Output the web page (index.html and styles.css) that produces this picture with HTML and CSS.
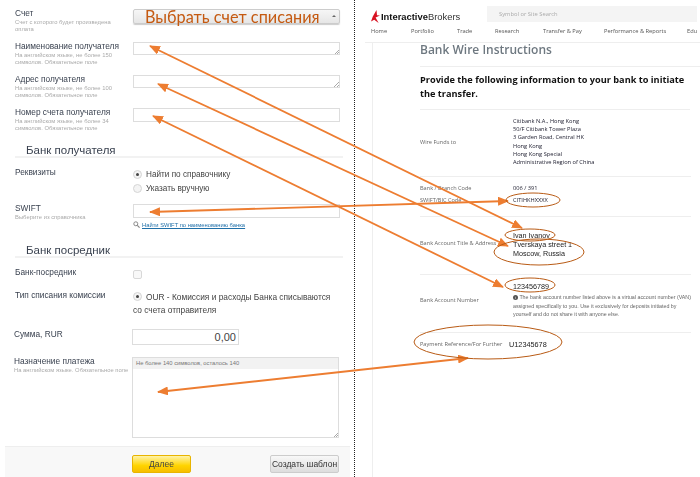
FILE: index.html
```html
<!DOCTYPE html>
<html>
  <head>
    <meta charset="UTF-8">
    <title>Банковский перевод</title>
    <link rel="stylesheet" href="styles.css">
  </head>
  <body>
    <div class="layout">
      <!-- форма банка -->
      <div class="form-side">
        <div class="row row-account">
          <div class="label-col">
            <div class="label">Счет</div>
            <div class="hint">Счет с которого будет произведена оплата</div>
          </div>
          <div class="select-box"><span class="select-text">Выбрать счет списания</span><span class="select-caret"></span></div>
        </div>
        <div class="row row-name">
          <div class="label-col">
            <div class="label">Наименование получателя</div>
            <div class="hint">На английском языке, не более 150 символов. Обязательное поле</div>
          </div>
          <div class="input input-area"><span class="grip"></span></div>
        </div>
        <div class="row row-name">
          <div class="label-col">
            <div class="label">Адрес получателя</div>
            <div class="hint">На английском языке, не более 100 символов. Обязательное поле</div>
          </div>
          <div class="input input-area"><span class="grip"></span></div>
        </div>
        <div class="row row-name">
          <div class="label-col">
            <div class="label">Номер счета получателя</div>
            <div class="hint">На английском языке, не более 34 символов. Обязательное поле</div>
          </div>
          <div class="input input-line"></div>
        </div>

        <div class="section-title first">Банк получателя</div>
        <div class="row row-details">
          <div class="label-col"><div class="label">Реквизиты</div></div>
          <div class="options">
            <div class="option"><span class="radio on"></span>Найти по справочнику</div>
            <div class="option"><span class="radio"></span>Указать вручную</div>
          </div>
        </div>
        <div class="row row-swift">
          <div class="label-col">
            <div class="label">SWIFT</div>
            <div class="hint">Выберите из справочника</div>
          </div>
          <div class="field-col">
            <div class="input input-line"></div>
            <div class="find">
              <svg width="7" height="7" viewBox="0 0 7 7"><circle cx="2.8" cy="2.8" r="2" fill="none" stroke="#888" stroke-width="1"/><path d="M4.3 4.3 6.6 6.6" stroke="#888" stroke-width="1.2"/></svg>
              <a class="find-link">Найти SWIFT по наименованию банка</a>
            </div>
          </div>
        </div>

        <div class="section-title">Банк посредник</div>
        <div class="row row-middle">
          <div class="label-col"><div class="label">Банк-посредник</div></div>
          <span class="checkbox"></span>
        </div>
        <div class="row row-fee">
          <div class="label-col"><div class="label">Тип списания комиссии</div></div>
          <div class="fee-text"><span class="radio on"></span>OUR - Комиссия и расходы Банка списываются со счета отправителя</div>
        </div>
        <div class="row row-sum">
          <div class="label-col"><div class="label">Сумма, RUR</div></div>
          <div class="input input-sum">0,00</div>
        </div>
        <div class="row row-purpose">
          <div class="label-col">
            <div class="label">Назначение платежа</div>
            <div class="hint nowrap">На английском языке. Обязательное поле</div>
          </div>
          <div class="input input-big">
            <div class="counter">Не более 140 символов, осталось 140</div>
            <span class="grip"></span>
          </div>
        </div>
        <div class="footer">
          <button class="btn-next">Далее</button>
          <button class="btn-template">Создать шаблон</button>
        </div>
      </div>

      <!-- инструкция Interactive Brokers -->
      <div class="ib-side">
        <div class="ib-head">
          <div class="logo">
            <svg width="9" height="13" viewBox="0 0 9 13"><path d="M5.5 0 6 5.2 9 5.4 4.6 7.6 7.6 13 3.2 9.8 0 11.6 1.8 6.4Z" fill="#d81222"/></svg>
            <span class="logo-text"><b>Interactive</b>Brokers</span>
          </div>
          <div class="search">Symbol or Site Search</div>
        </div>
        <div class="nav">
          <span class="nav-home">Home</span>
          <span class="nav-portfolio">Portfolio</span>
          <span class="nav-trade">Trade</span>
          <span class="nav-research">Research</span>
          <span class="nav-transfer">Transfer &amp; Pay</span>
          <span class="nav-reports">Performance &amp; Reports</span>
          <span>Edu</span>
        </div>
        <div class="ib-body">
          <h1 class="ib-title">Bank Wire Instructions</h1>
          <div class="ib-lead">Provide the following information to your bank to initiate the transfer.</div>

          <div class="ib-row row-funds">
            <div class="ib-label">Wire Funds to</div>
            <div class="ib-value">Citibank N.A., Hong Kong<br>50/F Citibank Tower Plaza<br>3 Garden Road, Central HK<br>Hong Kong<br>Hong Kong Special<br>Administrative Region of China</div>
          </div>
          <div class="ib-row row-code">
            <div class="code-line"><div class="ib-label">Bank / Branch Code</div><div class="ib-value">006 / 391</div></div>
            <div class="code-line"><div class="ib-label">SWIFT/BIC Code</div><div class="ib-value">CITIHKHXXXX</div></div>
          </div>
          <div class="ib-row row-title">
            <div class="ib-label">Bank Account Title &amp; Address</div>
            <div class="ib-value filled">Ivan Ivanov<br>Tverskaya street 1<br>Moscow, Russia</div>
          </div>
          <div class="ib-row row-number">
            <div class="ib-label">Bank Account Number</div>
            <div>
              <div class="ib-value filled">123456789</div>
              <div class="ib-note"><span class="info">i</span> The bank account number listed above is a virtual account number (VAN)<br>assigned specifically to you. Use it exclusively for deposits initiated by<br>yourself and do not share it with anyone else.</div>
            </div>
          </div>
          <div class="ib-row row-ref">
            <div class="ib-label">Payment Reference/For Further</div>
            <div class="ref-value">U12345678</div>
          </div>
        </div>
      </div>

      <!-- стрелки поверх скриншотов -->
      <svg class="marks" width="700" height="477" viewBox="0 0 700 477">
        <defs>
          <marker id="head" markerWidth="11" markerHeight="9" refX="10" refY="4.5" orient="auto-start-reverse" markerUnits="userSpaceOnUse">
            <path d="M0 0 11 4.5 0 9Z" fill="#ed7d31"/>
          </marker>
        </defs>
        <g fill="none" stroke="#ed7d31" stroke-width="1.8">
          <path d="M150 46 522 228" marker-start="url(#head)" marker-end="url(#head)"/>
          <path d="M158 84 508 246" marker-start="url(#head)" marker-end="url(#head)"/>
          <path d="M153 116 503 287" marker-start="url(#head)" marker-end="url(#head)"/>
          <path d="M150 212 508 201" marker-start="url(#head)" marker-end="url(#head)"/>
          <path d="M158 392 468 358" marker-start="url(#head)" marker-end="url(#head)"/>
        </g>
        <g fill="none" stroke="#b85a14" stroke-width="1">
          <ellipse cx="533" cy="200" rx="27" ry="7"/>
          <ellipse cx="530" cy="235" rx="25" ry="6"/>
          <ellipse cx="539" cy="252" rx="45" ry="13"/>
          <ellipse cx="530" cy="285" rx="25" ry="7"/>
          <ellipse cx="488" cy="342" rx="74" ry="17"/>
        </g>
      </svg>
    </div>
  </body>
</html>
```

FILE: styles.css
```css
/* базовый сброс */
html,body{margin:0;padding:0;height:100%;background:#fff;overflow:hidden;font-family:'Liberation Sans',Arial,sans-serif;color:#444;}
.layout{display:flex;width:700px;height:477px;position:relative;filter:blur(.35px);}
.marks{position:absolute;left:0;top:0;}

/* левая часть: форма */
.form-side{width:355px;height:477px;box-sizing:border-box;border-right:1px dotted #222;padding-top:9px;flex:none;}
.row{display:flex;padding-left:15px;width:325px;}
.label-col{width:118px;flex:none;margin-top:-1px;}
.label{font-size:8.3px;line-height:10px;color:#3a4250;}
.hint{font-size:5.85px;line-height:7px;color:#aaa;margin-top:1px;width:100px;}
.hint.nowrap{white-space:nowrap;width:auto;}
.row-account{height:33px;}
.row-name{height:33px;}
.row-details{height:36px;margin-top:10px;}
.row-swift{height:41px;}
.row-middle{height:23px;margin-top:10px;}
.row-fee{height:38px;}
.row-sum{height:28px;padding-left:14px;}
.row-sum .label-col{margin-top:0;}
.row-purpose{padding-left:14px;}

.select-box{width:207px;height:15px;box-sizing:border-box;border:1px solid #ccc;border-radius:2px;background:linear-gradient(#f6f6f6,#e6e6e6);box-shadow:0 1px 1px #ccc;display:flex;align-items:center;position:relative;}
.select-text{font-family:'Lato',sans-serif;font-size:16.3px;line-height:15px;color:#c55a11;margin-left:11px;white-space:nowrap;}
.select-caret{position:absolute;right:3px;top:5px;border:2px solid transparent;border-bottom:2px solid #666;border-top:0;}
.input{box-sizing:border-box;width:207px;background:#fff;border:1px solid #ddd;position:relative;}
.input-area{height:13px;}
.input-line{height:14px;}
.field-col{width:207px;}
.grip{position:absolute;right:0;bottom:0;width:5px;height:5px;background:linear-gradient(135deg,transparent 50%,#aaa 50%,#aaa 60%,transparent 60%,transparent 75%,#aaa 75%,#aaa 85%,transparent 85%);}

.section-title{font-size:11.5px;line-height:11px;color:#3a4250;padding-left:11px;margin-left:15px;width:328px;box-sizing:border-box;border-bottom:2px solid #f2f2f2;}
.section-title.first{margin-top:4px;}
.options{font-size:8.2px;color:#444;margin-top:-1px;}
.option{display:flex;align-items:center;height:14px;}
.radio{display:inline-block;width:7px;height:7px;border:1px solid #d5d5d5;border-radius:50%;background:#f4f4f4;margin-right:4px;position:relative;flex:none;}
.radio.on::after{content:"";position:absolute;left:2px;top:2px;width:3px;height:3px;border-radius:50%;background:#444;}
.find{display:flex;align-items:center;gap:2px;margin-top:3px;}
.find-link{font-size:5.8px;color:#1f6fa8;text-decoration:underline;}
.checkbox{width:7px;height:7px;border:1px solid #d8d8d8;border-radius:2px;background:#f8f8f8;margin-top:2px;}
.fee-text{font-size:8.35px;line-height:13px;color:#444;width:207px;}
.fee-text .radio{vertical-align:-1px;}
.input-sum{width:107px;height:16px;font-size:11px;line-height:15px;text-align:right;padding-right:2px;color:#444;}
.input-big{height:81px;width:208px;}
.counter{height:11px;background:#f2f2f2;font-size:5.8px;line-height:11px;padding-left:3px;color:#777;white-space:nowrap;}
.footer{margin:8px 0 0 5px;height:31px;box-sizing:border-box;width:345px;border-top:1px solid #eee;background:#f8f8f8;padding:8px 0 0 127px;display:flex;align-items:flex-start;}
.btn-next{width:59px;height:18px;font:8.5px 'Liberation Sans',sans-serif;color:#444;border:1px solid #e8b400;border-radius:2px;background:linear-gradient(#fff3a8,#ffd400 60%,#f6bd00);padding:0;}
.btn-template{width:69px;height:18px;margin-left:79px;font:8.5px 'Liberation Sans',sans-serif;color:#333;border:1px solid #ccc;border-radius:2px;background:linear-gradient(#f8f8f8,#ddd);padding:0;white-space:nowrap;}

/* правая часть: инструкция */
.ib-side{flex:1;min-width:0;overflow:hidden;}
.ib-head{display:flex;height:17px;padding:6px 0 0 16px;}
.logo{display:flex;align-items:center;gap:1px;width:116px;height:16px;margin-top:2px;}
.logo-text{font-size:9.4px;color:#333;}
.logo-text b{color:#111;}
.search{width:210px;height:16px;background:#f4f4f4;font:5.8px/16px 'Open Sans',sans-serif;color:#aaa;padding-left:12px;box-sizing:border-box;}
.nav{display:flex;font:5.7px/10px 'Open Sans',sans-serif;color:#555;padding:3px 0 0 6px;margin-left:10px;height:20px;box-sizing:border-box;border-bottom:1px solid #eee;white-space:nowrap;}
.nav-home{width:40px;}
.nav-portfolio{width:46px;}
.nav-trade{width:38px;}
.nav-research{width:48px;}
.nav-transfer{width:61px;}
.nav-reports{width:83px;}
.ib-body{margin-left:17px;border-left:1px solid #eee;padding-left:47px;height:435px;}
.ib-title{margin:0;font:600 12px/14px 'Open Sans',sans-serif;color:#6e7880;height:23px;border-bottom:1px solid #eee;width:280px;}
.ib-lead{font:bold 9.2px/14px 'Open Sans',sans-serif;color:#111;padding:6px 0 8px;border-bottom:1px solid #eee;width:270px;}
.ib-row{display:flex;border-bottom:1px solid #eee;width:271px;box-sizing:border-box;}
.ib-label{width:93px;flex:none;font:5.6px/8px 'Open Sans',sans-serif;color:#666;white-space:nowrap;}
.ib-value{font:5.7px/8.2px 'Open Sans',sans-serif;color:#223;white-space:nowrap;}
.ib-value.filled{font:7.2px/9px 'Liberation Sans',sans-serif;color:#222;}
.row-funds{height:67px;padding-top:7px;align-items:center;padding-bottom:10px;}
.row-code{flex-direction:column;height:40px;padding-top:7px;}
.code-line{display:flex;height:12px;}
.row-title{height:58px;padding-top:14px;}
.row-title .ib-label{padding-top:8px;}
.row-number{height:58px;padding-top:7px;}
.row-number .ib-label{padding-top:14px;}
.ib-note{font:5.3px/8.5px 'Liberation Sans',sans-serif;color:#666;white-space:nowrap;margin-top:2px;}
.info{display:inline-block;width:5px;height:5px;border-radius:50%;background:#555;color:#fff;font-size:4px;line-height:5px;text-align:center;}
.row-ref{border-bottom:0;padding-top:7px;}
.ref-value{font:7.3px/9px 'Liberation Sans',sans-serif;color:#222;margin-left:-4px;}
```
